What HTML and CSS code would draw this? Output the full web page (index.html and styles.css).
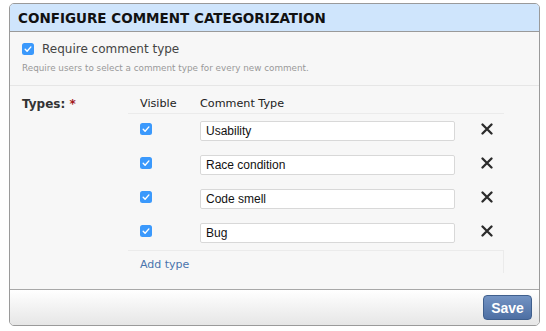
FILE: index.html
```html
<!DOCTYPE html>
<html lang="en">
<head>
    <meta charset="UTF-8">
    <title>Configure Comment Categorization</title>
    <link rel="stylesheet" href="styles.css">
</head>
<body>
<div class="panel">
    <div class="panel-header">
        <h2>Configure Comment Categorization</h2>
    </div>

    <div class="panel-body">
        <div class="section">
            <label class="check-row">
                <span class="check"><svg viewBox="0 0 12 12" width="12" height="12"><rect width="12" height="12" rx="2.5" fill="#3b99fc"/><path d="M3.2 6.3 L5.1 8.2 L8.9 3.9" fill="none" stroke="#fff" stroke-width="1.4" stroke-linecap="round" stroke-linejoin="round"/></svg></span>
                Require comment type
            </label>
            <p class="hint">Require users to select a comment type for every new comment.</p>
        </div>

        <div class="section types">
            <div class="field-label">Types: <span class="required">*</span></div>
            <table class="type-table">
                <thead>
                    <tr>
                        <th class="col-visible">Visible</th>
                        <th class="col-type">Comment Type</th>
                        <th class="col-remove"></th>
                    </tr>
                </thead>
                <tbody>
                    <tr>
                        <td><span class="check"><svg viewBox="0 0 12 12" width="12" height="12"><rect width="12" height="12" rx="2.5" fill="#3b99fc"/><path d="M3.2 6.3 L5.1 8.2 L8.9 3.9" fill="none" stroke="#fff" stroke-width="1.4" stroke-linecap="round" stroke-linejoin="round"/></svg></span></td>
                        <td><input type="text" value="Usability"></td>
                        <td class="remove"><svg viewBox="0 0 12 12" width="12" height="12"><path d="M1.5 1.5 L10.5 10.5 M10.5 1.5 L1.5 10.5" stroke="#2b2b2b" stroke-width="2.3" stroke-linecap="round"/></svg></td>
                    </tr>
                    <tr>
                        <td><span class="check"><svg viewBox="0 0 12 12" width="12" height="12"><rect width="12" height="12" rx="2.5" fill="#3b99fc"/><path d="M3.2 6.3 L5.1 8.2 L8.9 3.9" fill="none" stroke="#fff" stroke-width="1.4" stroke-linecap="round" stroke-linejoin="round"/></svg></span></td>
                        <td><input type="text" value="Race condition"></td>
                        <td class="remove"><svg viewBox="0 0 12 12" width="12" height="12"><path d="M1.5 1.5 L10.5 10.5 M10.5 1.5 L1.5 10.5" stroke="#2b2b2b" stroke-width="2.3" stroke-linecap="round"/></svg></td>
                    </tr>
                    <tr>
                        <td><span class="check"><svg viewBox="0 0 12 12" width="12" height="12"><rect width="12" height="12" rx="2.5" fill="#3b99fc"/><path d="M3.2 6.3 L5.1 8.2 L8.9 3.9" fill="none" stroke="#fff" stroke-width="1.4" stroke-linecap="round" stroke-linejoin="round"/></svg></span></td>
                        <td><input type="text" value="Code smell"></td>
                        <td class="remove"><svg viewBox="0 0 12 12" width="12" height="12"><path d="M1.5 1.5 L10.5 10.5 M10.5 1.5 L1.5 10.5" stroke="#2b2b2b" stroke-width="2.3" stroke-linecap="round"/></svg></td>
                    </tr>
                    <tr>
                        <td><span class="check"><svg viewBox="0 0 12 12" width="12" height="12"><rect width="12" height="12" rx="2.5" fill="#3b99fc"/><path d="M3.2 6.3 L5.1 8.2 L8.9 3.9" fill="none" stroke="#fff" stroke-width="1.4" stroke-linecap="round" stroke-linejoin="round"/></svg></span></td>
                        <td><input type="text" value="Bug"></td>
                        <td class="remove"><svg viewBox="0 0 12 12" width="12" height="12"><path d="M1.5 1.5 L10.5 10.5 M10.5 1.5 L1.5 10.5" stroke="#2b2b2b" stroke-width="2.3" stroke-linecap="round"/></svg></td>
                    </tr>
                </tbody>
                <tfoot>
                    <tr>
                        <td colspan="3"><a href="#" class="add-link">Add type</a></td>
                    </tr>
                </tfoot>
            </table>
        </div>
    </div>

    <div class="panel-footer">
        <button type="submit">Save</button>
    </div>
</div>
</body>
</html>
```

FILE: styles.css
```css
body {
    margin: 0;
    background: #ffffff;
    font-family: 'DejaVu Sans', Verdana, sans-serif;
}

.panel {
    width: 529px;
    height: 321px;
    margin: 3px 0 0 9px;
    border: 1px solid #9a9a9a;
    border-radius: 5px;
    background: #f7f7f7;
    display: flex;
    flex-direction: column;
    overflow: hidden;
}

.panel-header {
    height: 27px;
    background: #cfe5fc;
    border-bottom: 1px solid #9a9a9a;
    display: flex;
    align-items: center;
    padding-left: 8px;
}

.panel-header h2 {
    margin: 0;
    font-size: 13.5px;
    font-weight: bold;
    text-transform: uppercase;
    color: #111;
}

.panel-body {
    flex: 1;
}

.section {
    padding: 0 12px;
}

.section:first-child {
    height: 53px;
    border-bottom: 1px solid #e6e6e6;
}

.check-row {
    display: flex;
    align-items: center;
    gap: 8px;
    padding-top: 10px;
    font-size: 12px;
    color: #444;
}

.check {
    display: inline-block;
    width: 12px;
    height: 12px;
}

.check svg {
    display: block;
}

.hint {
    margin: 7px 0 0;
    font-size: 8.8px;
    color: #999;
}

.types {
    display: flex;
    padding-top: 8px;
}

.field-label {
    width: 106px;
    font-size: 12px;
    font-weight: bold;
    color: #333;
    padding-top: 3px;
}

.required {
    color: #a3161b;
}

.type-table {
    border-collapse: collapse;
    width: 376px;
}

.type-table th {
    text-align: left;
    font-size: 11.2px;
    font-weight: normal;
    color: #222;
    height: 19px;
    padding: 0;
    border-bottom: 1px solid #ebebeb;
}

.col-visible {
    width: 60px;
    padding-left: 12px !important;
}

.col-remove {
    width: 48px;
}

.type-table td {
    padding: 6px 0 7px;
    vertical-align: top;
}

.type-table td:first-child {
    padding-left: 12px;
}

.type-table input {
    box-sizing: border-box;
    width: 255px;
    height: 20px;
    margin: 0;
    padding: 0 5px;
    border: 1px solid #d8d8d8;
    border-radius: 2px;
    background: #fff;
    font-family: 'Liberation Sans', Arial, sans-serif;
    font-size: 12px;
    color: #111;
}

.remove {
    text-align: right;
    padding-right: 11px !important;
}

.remove svg {
    margin-top: 1px;
}

.type-table tfoot td {
    height: 22px;
    padding: 0 0 0 12px;
    border-top: 1px solid #ebebeb;
    border-right: 1px solid #ebebeb;
    vertical-align: middle;
}

.add-link {
    font-size: 11px;
    color: #4a74ad;
    text-decoration: none;
}

.panel-footer {
    height: 35px;
    border-top: 1px solid #a8a8a8;
    background: linear-gradient(#ffffff, #e6e6e6);
    display: flex;
    align-items: center;
    justify-content: flex-end;
    padding-right: 7px;
}

button {
    width: 49px;
    height: 25px;
    padding: 0;
    border: 1px solid #3f5f8d;
    border-radius: 4px;
    background: linear-gradient(#7393c3, #4d6fa3);
    color: #fff;
    font-family: 'Liberation Sans', Arial, sans-serif;
    font-size: 14px;
    font-weight: bold;
    cursor: pointer;
}
```
